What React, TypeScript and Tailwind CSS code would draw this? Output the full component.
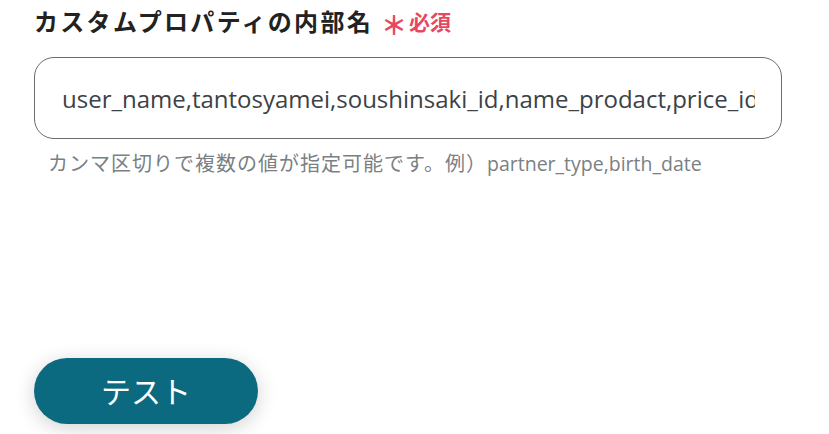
import React from "react";

export default function App() {
  const jp = { fontFamily: '"Open Sans", "Noto Sans CJK JP", sans-serif' };
  return (
    <div className="w-[829px] h-[434px] bg-white overflow-hidden relative" style={jp}>
      <div className="pl-[34px] pt-[2px] flex items-center h-[42px]">
        <span className="text-[24px] font-bold text-[#222] tracking-[2.3px] leading-[40px]">カスタムプロパティの内部名</span>
        <span className="ml-[8px] text-[26px] text-[#e8485f] font-bold leading-[40px] mt-[6px]">＊</span>
        <span className="ml-[2px] text-[21px] text-[#e8485f] font-bold leading-[40px]">必須</span>
      </div>
      <div className="ml-[34px] mt-[15px] w-[748px] h-[82px] border border-[#6b6b6b] rounded-[20px] flex items-center pl-[27px] pr-[26px] overflow-hidden">
        <span className="text-[24px] text-[#3c4246] whitespace-nowrap overflow-hidden block pt-[2px]">
          user_name,tantosyamei,soushinsaki_id,name_prodact,price_id
        </span>
      </div>
      <div className="ml-[48px] mt-[8px] text-[20px] text-[#7a7f84] leading-[34px] whitespace-nowrap">
        <span className="tracking-[1px]">カンマ区切りで複数の値が指定可能です。例）</span>
        <span className="text-[19.5px]">partner_type,birth_date</span>
      </div>
      <div className="absolute left-[34px] top-[358px]">
        <button className="w-[224px] h-[66px] rounded-full bg-[#0c6a80] text-white text-[30px] shadow-[0_4px_20px_rgba(0,0,0,0.18)]">
          テスト
        </button>
      </div>
    </div>
  );
}
